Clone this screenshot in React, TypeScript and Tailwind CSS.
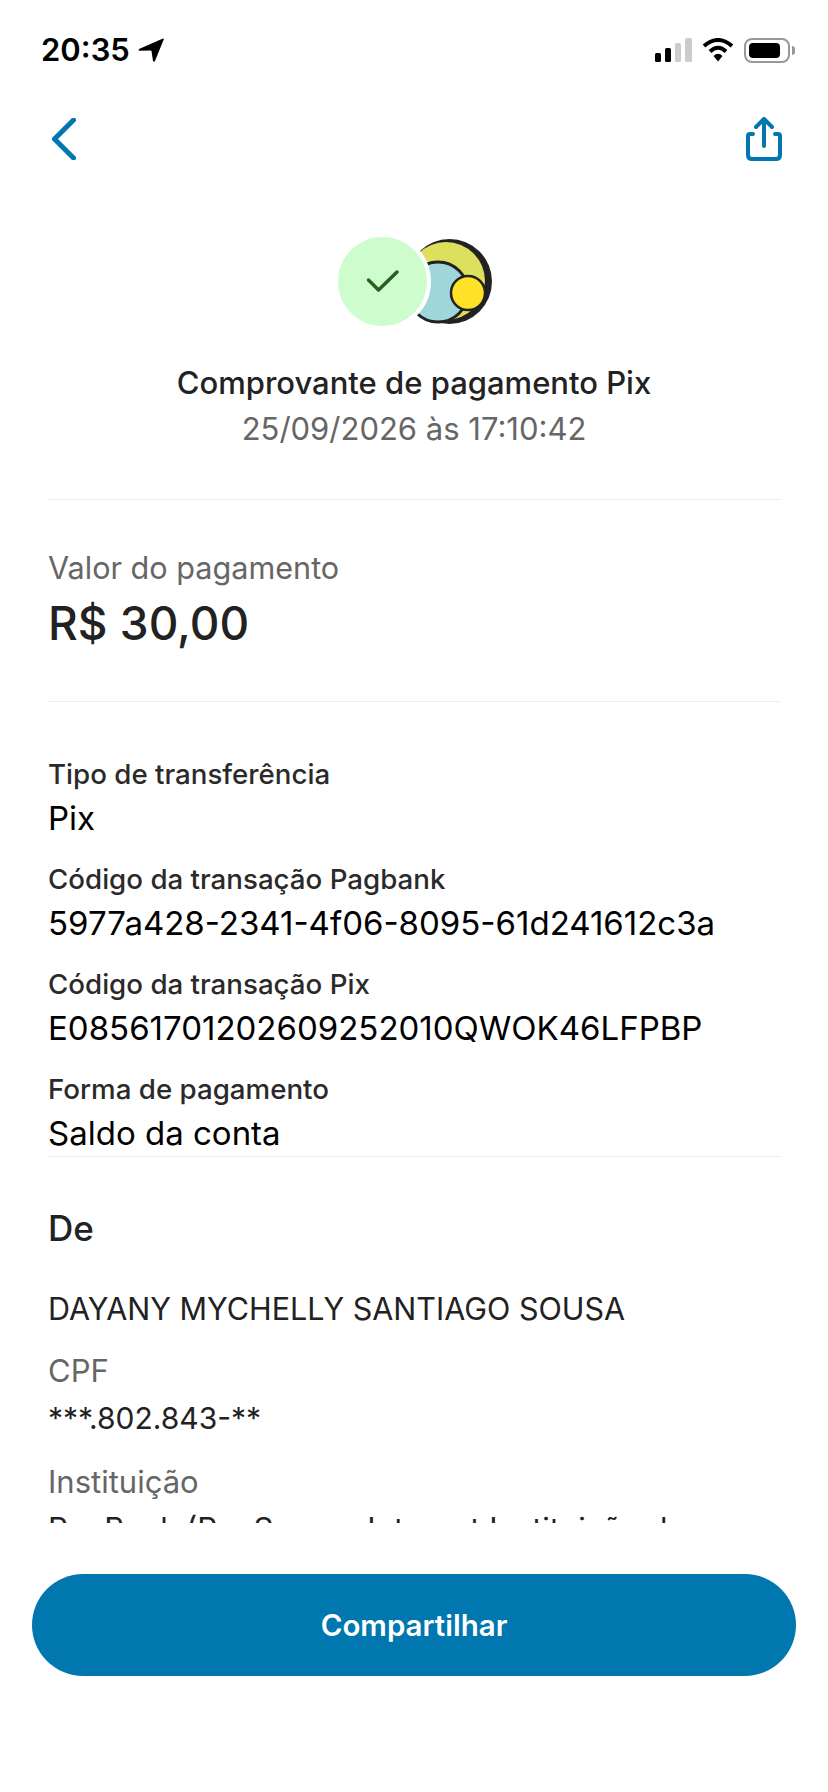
const font = { fontFamily: "Inter, sans-serif" };

function Field({ label, value }: { label: string; value: string }) {
  return (
    <div className="flex flex-col">
      <span className="text-[27.700px] leading-[46px] font-medium text-[#2a2a2a]">{label}</span>
      <span className="-mt-[2px] text-[33px] leading-[46px] text-black">{value}</span>
    </div>
  );
}

function StatusBar() {
  return (
    <div className="flex items-center justify-between h-[24px] mt-[38px] pl-[41px] pr-[33px]">
      <div className="flex items-center gap-[8px]">
        <span className="text-[31px] leading-[24px] font-semibold text-black">20:35</span>
        <svg width="26" height="24" viewBox="0 0 26 24">
          <path d="M1 11 L25 0.5 Q26 0 25.7 1.5 L17 23 Q16 24.500 15 23 L13.500 13 Q13.400 12.500 12.500 12.500 L1.500 12.800 Q0 12.500 1 11 Z" fill="#000" />
        </svg>
      </div>
      <div className="flex items-center">
        <svg width="37" height="24" viewBox="0 0 37 24">
          <rect x="0" y="15" width="6" height="9" rx="1.500" fill="#000" />
          <rect x="10" y="10" width="6" height="14" rx="1.500" fill="#000" />
          <rect x="20" y="5" width="6" height="19" rx="1.500" fill="#cccccc" />
          <rect x="30" y="0" width="7" height="24" rx="1.500" fill="#cccccc" />
        </svg>
        <svg className="ml-[10px]" width="32" height="24" viewBox="0 0 32 24">
          <path d="M2 8 Q16 -4 30 8" fill="none" stroke="#000" strokeWidth="4" />
          <path d="M8 13.500 Q16 6 24 13.500" fill="none" stroke="#000" strokeWidth="4" />
          <path d="M11.500 18 Q16 13.500 20.500 18 L16 23.500 Z" fill="#000" />
        </svg>
        <div className="ml-[10px] flex items-center">
          <div className="w-[46px] h-[25px] rounded-[8px] border-2 border-[#999999] p-[3px]">
            <div className="w-[31px] h-full rounded-[4px] bg-black" />
          </div>
          <div className="ml-[2px] w-[3px] h-[9px] rounded-r-[3px] bg-[#999999]" />
        </div>
      </div>
    </div>
  );
}

function Logo() {
  return (
    <div className="flex items-center justify-center mr-[2px]">
      <div className="relative z-10 w-[97px] h-[97px] rounded-full border-[4px] border-white bg-[#cdfdcd] flex items-center justify-center">
        <svg width="34" height="26" viewBox="0 0 34 26">
          <path d="M2.500 11 L12.500 21 L31 3" fill="none" stroke="#2a5e22" strokeWidth="3.500" strokeLinecap="round" strokeLinejoin="round" />
        </svg>
      </div>
      <svg className="-ml-[24px]" width="85" height="85" viewBox="0 0 85 85">
        <circle cx="42.500" cy="42.500" r="42.500" fill="#222222" />
        <circle cx="39" cy="42" r="39" fill="#dde05c" />
        <circle cx="31" cy="53" r="30" fill="#9fd6d9" stroke="#222222" strokeWidth="3" />
        <circle cx="61" cy="54" r="17" fill="#ffe127" stroke="#222222" strokeWidth="2.500" />
      </svg>
    </div>
  );
}

export default function App() {
  return (
    <div className="w-[828px] h-[1792px] flex flex-col bg-white overflow-hidden" style={font}>
      <StatusBar />

      <div className="flex items-center justify-between h-[44px] mt-[55px] pl-[52px] pr-[46px]">
        <svg width="24" height="42" viewBox="0 0 24 42">
          <path d="M21.500 2 L2.500 21 L21.500 40" fill="none" stroke="#0077ae" strokeWidth="5" strokeLinecap="round" strokeLinejoin="round" />
        </svg>
        <svg width="36" height="44" viewBox="0 0 36 44">
          <path d="M7 17 L4 17 Q2 17 2 19 L2 38 Q2 42 6 42 L30 42 Q34 42 34 38 L34 19 Q34 17 32 17 L29 17" fill="none" stroke="#0077ae" strokeWidth="4" strokeLinecap="round" />
          <path d="M18 29 L18 2 M10 10 L18 2 L26 10" fill="none" stroke="#0077ae" strokeWidth="4" strokeLinecap="round" strokeLinejoin="round" />
        </svg>
      </div>

      <div className="mt-[72px] h-[1290px] overflow-hidden">
        <Logo />
        <div className="mt-[31px] flex flex-col items-center">
          <span className="text-[31px] leading-[44px] font-medium text-[#222222]">Comprovante de pagamento Pix</span>
          <span className="mt-[1px] text-[31px] leading-[46px] text-[#666666]">25/09/2026 às 17:10:42</span>
        </div>

        <div className="mx-[48px] mt-[47px] border-t border-[#eeeeee]" />

        <div className="px-[48px] mt-[45px] flex flex-col">
          <span className="text-[30.600px] leading-[46px] text-[#666666]">Valor do pagamento</span>
          <span className="mt-[1px] text-[46px] leading-[62px] font-medium text-[#222222]">R$ 30,00</span>
        </div>

        <div className="mx-[48px] mt-[47px] border-t border-[#eeeeee]" />

        <div className="px-[48px] mt-[49px] flex flex-col gap-[15px]">
          <Field label="Tipo de transferência" value="Pix" />
          <Field label="Código da transação Pagbank" value="5977a428-2341-4f06-8095-61d241612c3a" />
          <Field label="Código da transação Pix" value="E08561701202609252010QWOK46LFPBP" />
          <Field label="Forma de pagamento" value="Saldo da conta" />
        </div>

        <div className="mx-[48px] border-t border-[#eeeeee]" />

        <div className="px-[48px] mt-[48px] flex flex-col">
          <span className="text-[35px] leading-[46px] font-medium text-[#222222]">De</span>
          <span className="mt-[35px] text-[30.500px] leading-[46px] text-[#222222]">DAYANY MYCHELLY SANTIAGO SOUSA</span>
          <span className="mt-[16px] text-[31px] leading-[46px] text-[#666666]">CPF</span>
          <span className="mt-[1px] text-[30px] leading-[46px] text-[#222222]">***.802.843-**</span>
          <span className="mt-[18px] text-[31px] leading-[46px] text-[#666666]">Instituição</span>
          <span className="mt-[1px] text-[31px] leading-[46px] text-[#222222] whitespace-nowrap">PagBank (PagSeguro Internet Instituição de</span>
        </div>
      </div>

      <div className="mt-[51px] px-[32px]">
        <button className="w-full h-[102px] rounded-[51px] bg-[#0077ae] text-white text-[29.500px] font-semibold">
          Compartilhar
        </button>
      </div>
    </div>
  );
}
